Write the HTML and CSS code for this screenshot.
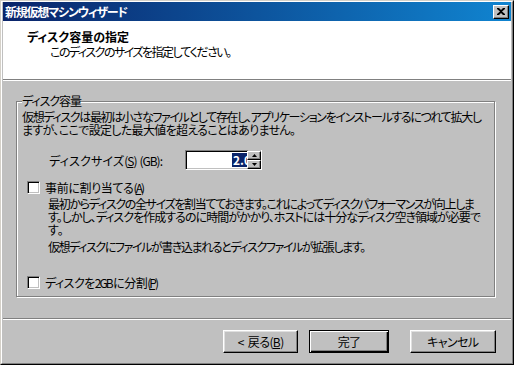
FILE: index.html
```html
<!DOCTYPE html>
<html lang="ja">
<head>
<meta charset="utf-8">
<link rel="stylesheet" href="styles.css">
</head>
<body>
<div class="window">
  <div class="frame">
    <div class="titlebar">
      <span class="title fit">新規仮想マシンウィザード</span>
      <span class="close"><svg width="8" height="7" viewBox="0 0 8 7"><path d="M0 0h2l2 2 2-2h2v1L5 3.5 8 6v1H6L4 5 2 7H0V6l3-2.5L0 1z" fill="#000"/></svg></span>
    </div>
    <div class="header">
      <div class="h-title fit">ディスク容量の指定</div>
      <div class="h-sub fit">このディスクのサイズを指定してください。</div>
    </div>
    <div class="body">
      <div class="group">
        <span class="legend fit">ディスク容量</span>
        <div class="line fit l1">仮想ディスクは最初は小さなファイルとして存在し、アプリケーションをインストールするにつれて拡大し</div>
        <div class="line fit l2">ますが、ここで設定した最大値を超えることはありません。</div>
        <div class="size-row">
          <span class="size-label fit">ディスクサイズ(<u>S</u>) (GB):</span>
          <span class="edit"><span class="sel">2.0</span></span>
          <span class="spin">
            <span class="sbtn"><svg width="5" height="3" viewBox="0 0 5 3"><path d="M2.5 0L5 3H0z" fill="#000"/></svg></span>
            <span class="sbtn"><svg width="5" height="3" viewBox="0 0 5 3"><path d="M0 0h5L2.5 3z" fill="#000"/></svg></span>
          </span>
        </div>
        <div class="check-row first">
          <span class="cbox"></span>
          <span class="c1 fit">事前に割り当てる(<u>A</u>)</span>
        </div>
        <div class="desc">
          <div class="line fit d1">最初からディスクの全サイズを割当てておきます。これによってディスクパフォーマンスが向上しま</div>
          <div class="line fit d2">す。しかし、ディスクを作成するのに時間がかかり、ホストには十分なディスク空き領域が必要で</div>
          <div class="line">す。</div>
          <div class="line fit d4">仮想ディスクにファイルが書き込まれるとディスクファイルが拡張します。</div>
        </div>
        <div class="check-row second">
          <span class="cbox"></span>
          <span class="c2 fit">ディスクを2GBに分割(<u>P</u>)</span>
        </div>
      </div>
      <div class="sep"></div>
      <div class="buttons">
        <span class="btn b1"><span class="lt">&lt;</span>戻る(<u>B</u>)</span>
        <span class="btn b2 default">完了</span>
        <span class="btn b3">キャンセル</span>
      </div>
    </div>
  </div>
</div>
</body>
</html>
```

FILE: styles.css
```css
html, body {
  margin: 0;
  padding: 0;
  background: #c0c0c0;
}
body {
  font-family: "Noto Sans CJK JP", "Noto Sans", sans-serif;
  font-size: 12px;
  font-feature-settings: "palt";
  color: #000;
}
.fit {
  display: block;
  letter-spacing: -2px;
  text-align: justify;
  text-align-last: justify;
  text-justify: inter-character;
}
.window {
  box-sizing: border-box;
  width: 514px;
  height: 365px;
  border-top: 1px solid #d4d0c8;
  border-left: 1px solid #d4d0c8;
  border-right: 1px solid #000;
  border-bottom: 1px solid #000;
}
.frame {
  box-sizing: border-box;
  height: 100%;
  border-top: 1px solid #fff;
  border-left: 1px solid #fff;
  border-right: 1px solid #808080;
  border-bottom: 1px solid #808080;
  padding: 0 1px 1px 1px;
  background: #c0c0c0;
  display: flex;
  flex-direction: column;
}
.titlebar {
  height: 19px;
  background: linear-gradient(to right, #0a246a, #1084d0);
  display: flex;
  align-items: center;
  justify-content: space-between;
  padding: 0 2px 0 2px;
}
.title {
  color: #fff;
  font-weight: bold;
  line-height: 18px;
  width: 121px;
}
.close {
  box-sizing: border-box;
  width: 16px;
  height: 14px;
  background: #c0c0c0;
  border-top: 1px solid #fff;
  border-left: 1px solid #fff;
  border-right: 1px solid #000;
  border-bottom: 1px solid #000;
  box-shadow: inset -1px -1px #808080;
  display: flex;
  align-items: center;
  justify-content: center;
  padding-bottom: 1px;
}
.header {
  height: 59px;
  background: #fff;
  border-bottom: 1px solid #808080;
  box-shadow: 0 1px #fff;
  box-sizing: border-box;
  padding: 8px 0 0 22px;
}
.h-title {
  font-weight: bold;
  line-height: 16px;
  width: 100px;
  margin-left: 2px;
}
.h-sub {
  margin-left: 25px;
  line-height: 14px;
  width: 180px;
}
.body {
  flex: 1;
  padding: 21px 15px 0 13px;
}
.group {
  position: relative;
  box-sizing: border-box;
  width: 479px;
  border: 1px solid #808080;
  box-shadow: inset 1px 1px #fff, 1px 1px #fff;
  padding: 8px 0 7px 5px;
}
.legend {
  position: absolute;
  top: -8px;
  left: 5px;
  background: #c0c0c0;
  line-height: 14px;
  width: 58px;
}
.line {
  line-height: 13px;
}
.l1 { width: 458px; }
.l2 { width: 272px; }
.d1 { width: 425px; }
.d2 { width: 431px; }
.d4 { width: 316px; margin-top: 4px; }
.size-row {
  display: flex;
  align-items: center;
  margin-top: 14px;
  height: 20px;
}
.size-label {
  margin-left: 27px;
  width: 113px;
  margin-right: 23px;
  letter-spacing: -1px;
}
.edit {
  box-sizing: border-box;
  width: 64px;
  height: 20px;
  background: #fff;
  border-top: 1px solid #808080;
  border-left: 1px solid #808080;
  border-right: 1px solid #fff;
  border-bottom: 1px solid #fff;
  box-shadow: inset 1px 1px #000, inset -1px -1px #c0c0c0;
  display: flex;
  justify-content: flex-end;
  align-items: center;
  overflow: hidden;
}
.sel {
  background: #0a246a;
  color: #fff;
  line-height: 14px;
  padding: 0 1px;
  margin-right: -4px;
  font-weight: bold;
}
.spin {
  display: flex;
  flex-direction: column;
  height: 20px;
  margin-left: -2px;
  box-sizing: border-box;
  border-right: 1px solid #fff;
  border-bottom: 1px solid #fff;
}
.sbtn {
  box-sizing: border-box;
  width: 14px;
  height: 9px;
  background: #c0c0c0;
  border-top: 1px solid #fff;
  border-left: 1px solid #fff;
  border-right: 1px solid #000;
  border-bottom: 1px solid #000;
  box-shadow: inset -1px -1px #808080;
  display: flex;
  align-items: center;
  justify-content: center;
}
.sbtn:first-child { margin-top: 1px; }
.check-row {
  display: flex;
  align-items: center;
  height: 14px;
}
.c1 { width: 98px; }
.c2 { width: 112px; }
.check-row.first { margin-top: 10px; }
.check-row.second { margin-top: 22px; }
.cbox {
  box-sizing: border-box;
  width: 13px;
  height: 13px;
  background: #fff;
  border-top: 1px solid #808080;
  border-left: 1px solid #808080;
  border-right: 1px solid #fff;
  border-bottom: 1px solid #fff;
  box-shadow: inset 1px 1px #000, inset -1px -1px #c0c0c0;
  margin-left: 5px;
  margin-right: 5px;
}
.desc {
  padding-left: 26px;
  margin-top: 3px;
}
.sep {
  margin-top: 21px;
  margin-left: -13px;
  margin-right: -15px;
  border-top: 1px solid #808080;
  border-bottom: 1px solid #fff;
}
.buttons {
  display: flex;
  margin-top: 10px;
  padding-left: 207px;
}
.btn {
  box-sizing: border-box;
  height: 23px;
  background: #c0c0c0;
  border-top: 1px solid #fff;
  border-left: 1px solid #fff;
  border-right: 1px solid #000;
  border-bottom: 1px solid #000;
  box-shadow: inset -1px -1px #808080, inset 1px 1px #dfdfdf;
  display: flex;
  align-items: center;
  justify-content: center;
  letter-spacing: -0.6px;
}
.lt { margin-right: 4px; }
.b1 { width: 76px; }
.b2 { width: 80px; margin-left: 11px; }
.b3 { width: 87px; margin-left: 21px; }
.btn.default {
  border: 1px solid #000;
  box-shadow: inset 1px 1px #fff, inset -1px -1px #000, inset -2px -2px #808080;
}
```
